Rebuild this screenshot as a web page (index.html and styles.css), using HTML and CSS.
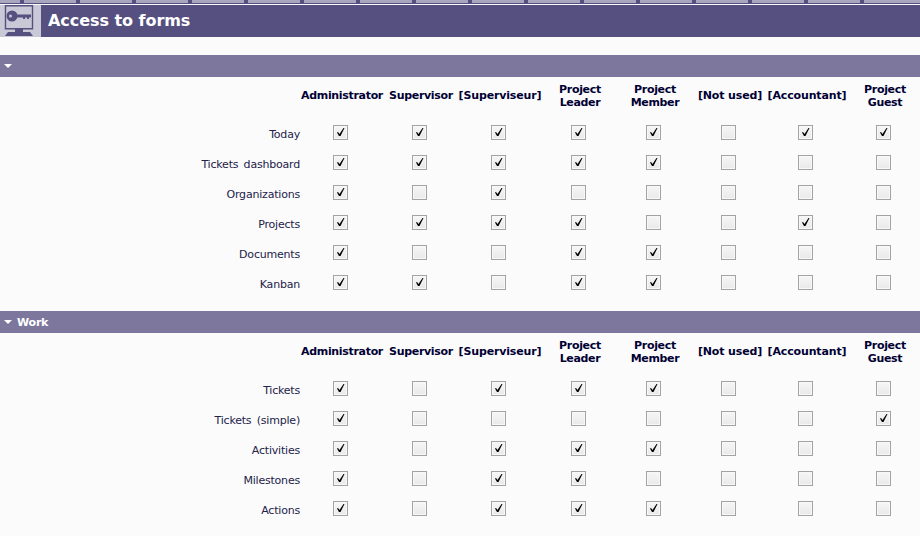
FILE: index.html
```html
<!DOCTYPE html>
<html lang="en">
<head>
<meta charset="utf-8">
<title>Access to forms</title>
<link rel="stylesheet" href="styles.css">
</head>
<body>
<div class="tabs"></div>
<header class="title">
  <div class="logo">
    <svg width="41" height="32" viewBox="0 0 41 32"><path d="M5.500.7h27v23h-27z" fill="#c9c8d6" stroke="#55507f" stroke-width="1.400"/><circle cx="12" cy="11" r="5.500" fill="#55507f"/><path d="M15 9.500h16v3h-2v1.500h-2v-1.500h-2v1.500h-2v-1.500h-8z" fill="#55507f"/><circle cx="10.500" cy="11" r="1.500" fill="#c9c8d6"/><path d="M15 24h8v3h-8zM8 27h22l3 4H5z" fill="#55507f"/></svg>
  </div>
  <h1>Access to forms</h1>
</header>
<div class="spacer"></div>
<section class="group">
  <h2 class="bar"><span class="arrow"></span></h2>
  <div class="grid">
    <div></div><b>Administrator</b><b>Supervisor</b><b class="br">[Superviseur]</b><b class="two">Project Leader</b><b class="two">Project Member</b><b class="br">[Not used]</b><b class="br">[Accountant]</b><b class="two">Project Guest</b>
    <label>Today</label><s class="on"></s><s class="on"></s><s class="on"></s><s class="on"></s><s class="on"></s><s></s><s class="on"></s><s class="on"></s>
    <label>Tickets dashboard</label><s class="on"></s><s class="on"></s><s class="on"></s><s class="on"></s><s class="on"></s><s></s><s></s><s></s>
    <label>Organizations</label><s class="on"></s><s></s><s class="on"></s><s></s><s></s><s></s><s></s><s></s>
    <label>Projects</label><s class="on"></s><s class="on"></s><s class="on"></s><s class="on"></s><s></s><s></s><s class="on"></s><s></s>
    <label>Documents</label><s class="on"></s><s></s><s></s><s class="on"></s><s class="on"></s><s></s><s></s><s></s>
    <label>Kanban</label><s class="on"></s><s class="on"></s><s></s><s class="on"></s><s class="on"></s><s></s><s></s><s></s>
  </div>
</section>
<section class="group">
  <h2 class="bar"><span class="arrow"></span>Work</h2>
  <div class="grid">
    <div></div><b>Administrator</b><b>Supervisor</b><b class="br">[Superviseur]</b><b class="two">Project Leader</b><b class="two">Project Member</b><b class="br">[Not used]</b><b class="br">[Accountant]</b><b class="two">Project Guest</b>
    <label>Tickets</label><s class="on"></s><s></s><s class="on"></s><s class="on"></s><s class="on"></s><s></s><s></s><s></s>
    <label>Tickets (simple)</label><s class="on"></s><s></s><s></s><s></s><s></s><s></s><s></s><s class="on"></s>
    <label>Activities</label><s class="on"></s><s></s><s class="on"></s><s class="on"></s><s class="on"></s><s></s><s></s><s></s>
    <label>Milestones</label><s class="on"></s><s></s><s class="on"></s><s class="on"></s><s></s><s></s><s></s><s></s>
    <label>Actions</label><s class="on"></s><s></s><s class="on"></s><s class="on"></s><s class="on"></s><s></s><s></s><s></s>
  </div>
</section>
</body>
</html>
```
FILE: styles.css
```css
html, body { margin: 0; padding: 0; height: 536px; overflow: hidden; }
body { background: #fbfbfb; font-family: "DejaVu Sans", Verdana, sans-serif; font-size: 11px; color: #22224a; }
.tabs { height: 3px; border-bottom: 1px solid #55507f; margin-bottom: 1px; background: repeating-linear-gradient(90deg, #a9a6c0 0 52px, #55507f 52px 56px) -32px 0; }
.title { display: flex; height: 32px; background: #55507f; }
.logo { width: 41px; background: #c9c8d6; }
.logo svg { display: block; }
.title h1 { margin: 0 0 0 7px; font-size: 16px; line-height: 32px; letter-spacing: -0.05px; color: #fff; font-weight: bold; }
.spacer { height: 18px; }
.bar { margin: 0; height: 22px; background: #7d779d; color: #fff; font-size: 11px; font-weight: bold; display: flex; align-items: center; letter-spacing: -0.2px; }
.arrow { width: 0; height: 0; margin: 0 5px 0 4px; border-style: solid; border-width: 4px 4px 0; border-color: #fff transparent transparent; }
.group + .group { margin-top: 14px; }
.grid { display: grid; grid-template-columns: 303px 78px 80px 78px 82px 68px 82px 72px 84px; grid-template-rows: 40px repeat(6, 30px); align-items: center; justify-items: center; }
.grid b { color: #000033; font-size: 11px; line-height: 13px; text-align: center; white-space: nowrap; letter-spacing: -0.32px; padding-bottom: 4px; }
.grid b.br { letter-spacing: -0.15px; }
.grid b.two { width: min-content; white-space: normal; padding-bottom: 2px; }
.grid label { justify-self: end; padding: 4px 3px 0 0; letter-spacing: -0.2px; word-spacing: 2px; }
.grid s { display: block; width: 13px; height: 13px; margin-right: 4px; border: 1px solid #a3a3a3; background: linear-gradient(#f6f6f6, #e9e9e9); box-shadow: inset 0 0 0 1px #f8f8f8; }
.grid s.on { background: url("data:image/svg+xml,%3Csvg xmlns='http://www.w3.org/2000/svg' width='13' height='13'%3E%3Cpath d='M3 6.500l1-.5 1.500 2L9.500 2h1l-4 8h-1.500z' fill='%23000'/%3E%3C/svg%3E") no-repeat, linear-gradient(#f6f6f6, #e9e9e9); }
```
